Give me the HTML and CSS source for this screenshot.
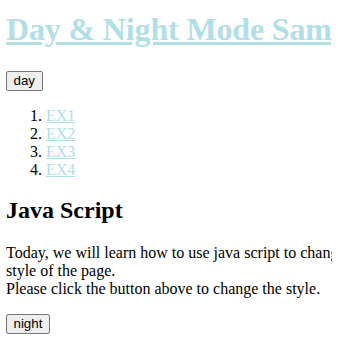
FILE: index.html
```html
<!DOCTYPE html>
<html lang="en">

<head>
    <meta charset="UTF-8">
    <title>Day &amp; Night Mode Sample</title>
    <link rel="stylesheet" href="styles.css">
</head>

<body>
    <div class="page">
        <h1 class="title"><a href="#">Day &amp; Night Mode Sample</a></h1>
        <button class="mode-btn">day</button>
        <ol class="examples">
            <li><a href="#">EX1</a></li>
            <li><a href="#">EX2</a></li>
            <li><a href="#">EX3</a></li>
            <li><a href="#">EX4</a></li>
        </ol>
        <h2 class="section">Java Script</h2>
        <p class="intro">Today, we will learn how to use java script to change the style of the page.<br>Please click the button above to change the style.</p>
        <button class="mode-btn">night</button>
    </div>
</body>

</html>
```

FILE: styles.css
```css
html {
    overflow: hidden;
}

body {
    margin: 8px 6px;
    font-family: "Liberation Serif", "Times New Roman", serif;
    font-size: 16px;
    color: #000;
    background: #fff;
}

.page {
    width: 380px;
}

a {
    color: powderblue;
}

.title {
    font-size: 32px;
    margin: 3px 0 23px;
    letter-spacing: -0.15px;
    white-space: nowrap;
}

.mode-btn {
    display: block;
    font-family: "Liberation Sans", Arial, sans-serif;
    font-size: 13.33px;
    line-height: 16px;
    padding: 1px 6.5px;
    border: 1px solid #767676;
    border-radius: 2px;
    background: #efefef;
    color: #000;
}

.examples {
    margin: 16px 0;
    padding-left: 40px;
}

.section {
    font-size: 24px;
    margin: 18px 0 20px;
}

.intro {
    margin: 20px 0 16px;
}
```
